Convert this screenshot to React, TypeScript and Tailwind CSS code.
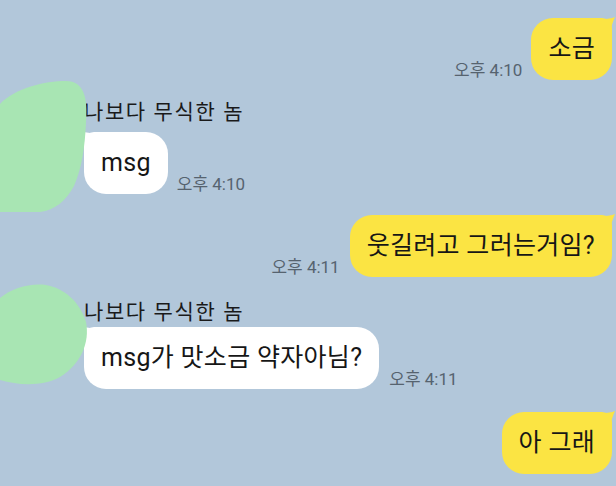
const font = { fontFamily: '"Roboto", "Noto Sans CJK KR", sans-serif' };

function Time({ text }: { text: string }) {
  return <span className="text-[17px] leading-[20px] text-[#56636f] whitespace-nowrap">{text}</span>;
}

function MyBubble({ text }: { text: string }) {
  return (
    <div className="relative bg-[#fbe443] rounded-[22px] rounded-tr-[10px] px-[17px] py-[13px] text-[25px] leading-[36px] tracking-[0.3px] text-[#161616] whitespace-nowrap">
      <svg className="absolute -right-[4px] -top-[1px]" width="14" height="16" viewBox="0 0 14 16">
        <path d="M0 2 Q 8 2 13 0 Q 10 6 8 16 L0 16 Z" fill="#fbe443" />
      </svg>
      <span className="relative">{text}</span>
    </div>
  );
}

function OtherBubble({ text }: { text: string }) {
  return (
    <div className="relative bg-white rounded-[22px] rounded-tl-[10px] px-[17px] py-[13px] text-[25px] leading-[36px] tracking-[0.3px] text-[#161616] whitespace-nowrap">
      <svg className="absolute -left-[4px] -top-[1px]" width="14" height="16" viewBox="0 0 14 16">
        <path d="M14 2 Q 6 2 1 0 Q 4 6 6 16 L14 16 Z" fill="#ffffff" />
      </svg>
      <span className="relative">{text}</span>
    </div>
  );
}

function Blob({ d, h }: { d: string; h: number }) {
  return (
    <svg width="90" height={h} viewBox={`0 0 90 ${h}`} className="block">
      <path d={d} fill="#a8e5b3" />
    </svg>
  );
}

export default function App() {
  return (
    <div className="w-[616px] h-[486px] overflow-hidden bg-[#b2c7da] flex flex-col" style={font}>
      <div className="flex justify-end items-end gap-[9px] pr-[4px] mt-[18px]">
        <Time text="오후 4:10" />
        <MyBubble text="소금" />
      </div>

      <div className="flex items-start">
        <div className="w-[84px] shrink-0 relative z-10">
          <Blob h={132} d="M0 24 C 15 8, 45 1, 66 1 C 84 1, 88 18, 86 42 C 85 66, 82 88, 74 106 C 66 121, 55 130, 40 132 L 0 132 Z" />
        </div>
        <div className="flex flex-col items-start pt-[19px]">
          <div className="text-[21px] leading-[26px] tracking-[1.6px] text-[#1a1a1a]">나보다 무식한 놈</div>
          <div className="flex items-end gap-[9px] mt-[7px]">
            <OtherBubble text="msg" />
            <Time text="오후 4:10" />
          </div>
        </div>
      </div>

      <div className="flex justify-end items-end gap-[10px] pr-[4px] mt-[3px]">
        <Time text="오후 4:11" />
        <MyBubble text="웃길려고 그러는거임?" />
      </div>

      <div className="flex items-start mt-[5px]">
        <div className="w-[84px] shrink-0 relative z-10">
          <Blob h={104} d="M0 16 C 12 6, 30 1, 46 3 C 64 6, 80 20, 86 40 C 90 60, 81 82, 60 95 C 44 104, 20 104, 0 98 Z" />
        </div>
        <div className="flex flex-col items-start pt-[17px]">
          <div className="text-[21px] leading-[26px] tracking-[1.6px] text-[#1a1a1a]">나보다 무식한 놈</div>
          <div className="flex items-end gap-[10px] mt-[2px]">
            <OtherBubble text="msg가 맛소금 약자아님?" />
            <Time text="오후 4:11" />
          </div>
        </div>
      </div>

      <div className="flex justify-end items-end pr-[4px] mt-[23px]">
        <MyBubble text="아 그래" />
      </div>
    </div>
  );
}
